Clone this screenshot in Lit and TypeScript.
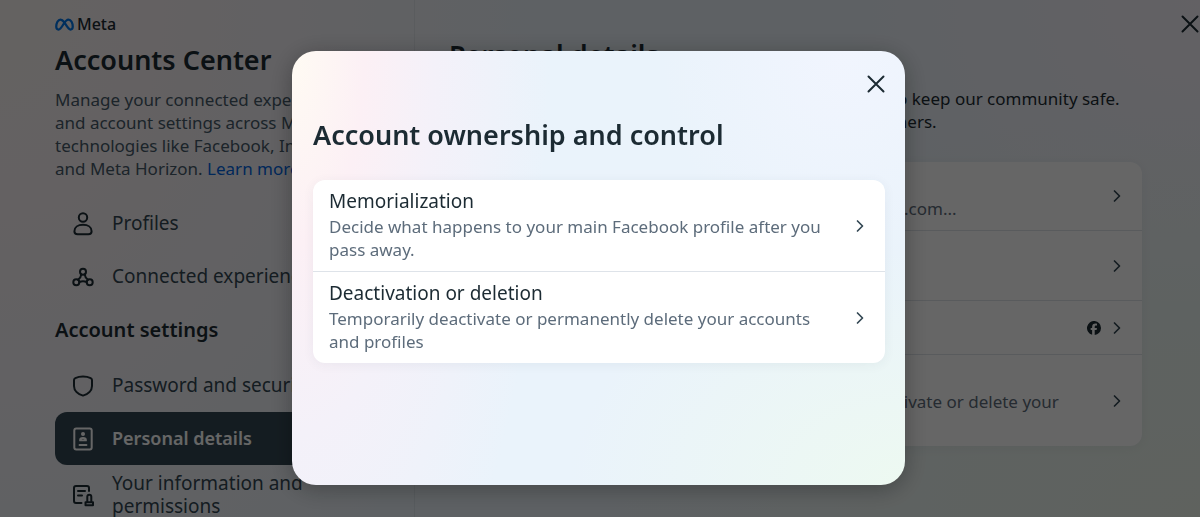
import { LitElement, html, css, svg } from "lit";
import { customElement, property } from "lit/decorators.js";
import { classMap } from "lit/directives/class-map.js";

const stroke = (body: unknown) => html`
  <svg width="24" height="24" viewBox="0 0 24 24" fill="none" stroke="currentColor"
    stroke-width="2" stroke-linecap="round" stroke-linejoin="round" aria-hidden="true">${body}</svg>`;

const icons: Record<string, unknown> = {
  profile: stroke(svg`<circle cx="12" cy="5.500" r="4.200"/><path d="M12 12.800c-5 0-8.600 2.400-8.600 6.400 0 2.100 1.200 3.100 3.200 3.100h10.800c2 0 3.200-1 3.200-3.100 0-4-3.600-6.400-8.600-6.400z"/>`),
  connected: stroke(svg`<circle cx="12" cy="6.800" r="3"/><circle cx="5.300" cy="17.300" r="3"/><circle cx="18.700" cy="17.300" r="3"/><path d="M10.300 9.300C10 12 8.800 13.500 7 14.800M13.700 9.300c.3 2.700 1.500 4.200 3.300 5.500M8.300 17c2.200-1 5.200-1 7.400 0"/>`),
  shield: stroke(svg`<path d="M12 2.600c2.900 0 5.500.5 7.700 1.500.8.400 1.300 1.100 1.300 2V12c0 4.600-3.900 8.200-9 9.600C6.900 20.200 3 16.600 3 12V6.100c0-.9.500-1.600 1.300-2C6.500 3.100 9.100 2.600 12 2.600z"/>`),
  details: stroke(svg`<rect x="3.300" y="1.500" width="17.400" height="21" rx="2"/><circle cx="12" cy="7" r="2" fill="currentColor" stroke="none"/><path d="M9 13.400c0-1.900 1.300-2.400 3-2.400s3 .5 3 2.400zM8.500 18h7" stroke-width="1.800"/>`),
  info: stroke(svg`<path d="M10.500 20H5a2 2 0 0 1-2-2V5a2 2 0 0 1 2-2h11a2 2 0 0 1 2 2v3M7 8h7M7 12.500h4"/><path d="M14.500 19.300h7.500v3h-7.500zM16.300 19.300v-5.500a2 2 0 1 1 4 0v5.500"/>`),
};

const close = html`<svg width="18" height="18" viewBox="0 0 18 18" fill="none" stroke="currentColor"
  stroke-width="2" stroke-linecap="round" aria-hidden="true"><path d="M1.500 1.500l15 15M16.500 1.500l-15 15"/></svg>`;

const chevron = html`<svg class="chevron" width="16" height="16" viewBox="0 0 16 16" fill="none"
  stroke="currentColor" stroke-width="1.700" stroke-linecap="round" stroke-linejoin="round"
  aria-hidden="true"><path d="M5.500 3l5 5-5 5"/></svg>`;

const facebook = html`<svg class="badge" width="14" height="14" viewBox="0 0 24 24" role="img" aria-label="Facebook">
  <path fill="currentColor" d="M24 12a12 12 0 1 0-15.200 11.500v-8H6.300V12h2.500v-1.600c0-4 1.900-6 5.900-6 .8 0 2 .2 2.500.3V8c-.3 0-.7-.1-1.300-.1-1.900 0-2.700.7-2.700 2.600V12h3.900l-.7 3.600h-3.200v8.300A12 12 0 0 0 24 12z"/></svg>`;

const base = css`
  * { box-sizing: border-box; }
  h1, h2, h3, p, ul { margin: 0; padding: 0; }
  ul { list-style: none; }
  svg { display: block; flex: none; }
  button { font: inherit; color: inherit; background: none; border: 0; padding: 0; text-align: left; cursor: pointer; }
  a { color: inherit; text-decoration: none; }
`;

@customElement("settings-list")
class SettingsList extends LitElement {
  @property({ attribute: false }) items: { title: string; text?: string; badge?: boolean }[] = [];

  static styles = [base, css`
    :host { display: block; }
    .card { background: #fff; border-radius: 12px; box-shadow: 0 2px 12px rgba(52, 72, 84, 0.06); overflow: hidden; }
    .item + .item { border-top: 1px solid #dee3e9; }
    .row { width: 100%; min-height: 53px; padding: 10px 17px 10px 16px; display: flex; align-items: center; gap: 8px; }
    .copy { flex: 1; min-width: 0; display: grid; gap: 2px; line-height: 23px; }
    .title { color: #1c2b33; font-size: 19px; }
    .text { color: #5d6c7b; font-size: 17px; }
    .chevron { color: #344854; }
    .badge { color: #1c2b33; }
    :host([roomy]) .item:nth-child(2) .row { min-height: 69px; }
  `];

  render() {
    return html`<ul class="card">
      ${this.items.map((i) => html`<li class="item"><button class="row">
        <span class="copy"><span class="title">${i.title}</span>${i.text ? html`<span class="text">${i.text}</span>` : ""}</span>
        ${i.badge ? facebook : ""}${chevron}
      </button></li>`)}
    </ul>`;
  }
}

@customElement("app-root")
class AppRoot extends LitElement {
  static styles = [base, css`
    :host { display: block; height: 100vh; overflow: hidden; font-family: "Noto Sans", sans-serif; font-size: 17px; line-height: 23px; color: #1c2b33; }
    .page {
      height: 100%; display: grid; grid-template-columns: 415px 1fr; overflow: hidden;
      background:
        radial-gradient(45% 140% at 0% 0%, #fbf5f2 0%, #faf3f5 25%, #f5f2f7 50%, rgba(238, 243, 251, 0) 100%),
        radial-gradient(50% 80% at 100% 100%, #edf6ec 0%, rgba(237, 246, 236, 0) 100%),
        radial-gradient(30% 60% at 100% 0%, #f7f3fb 0%, rgba(247, 243, 251, 0) 100%),
        #ebf3f9;
    }
    .side { padding: 15px 29px 0 55px; border-right: 1px solid rgba(52, 72, 84, 0.08); }
    .brand { display: flex; align-items: center; gap: 3px; height: 18px; font-size: 16px; font-weight: 500; }
    .side h1 { font-size: 27px; line-height: 34px; font-weight: 600; margin-top: 10px; }
    .intro { margin-top: 11px; color: #465a69; }
    .intro a { color: #0064e0; }
    .nav { margin-top: 17px; }
    .nav h2 { font-size: 20px; line-height: 24px; font-weight: 600; margin: 15px 0 17px; }
    .link { display: flex; align-items: center; gap: 17px; min-height: 53px; padding: 7px 16px; border-radius: 12px; color: #344854; font-size: 19px; }
    .link svg { color: #1c2b33; }
    .link.current { background: #344854; color: #fff; font-size: 18px; font-weight: 600; }
    .link.current svg { color: #fff; }
    .main { position: relative; padding: 38px 58px 0 34px; }
    .main h2 { font-size: 27px; line-height: 34px; font-weight: 600; }
    .lead { margin: 15px 0 29px; }
    .leave { position: absolute; top: 15px; right: 1px; }
    .backdrop { position: fixed; inset: 0; display: flex; justify-content: center; align-items: flex-start; padding: 51px 16px 0 13px; background: rgba(0, 0, 0, 0.6); }
    .dialog {
      width: 100%; max-width: 613px; min-height: 434px; padding: 24px 20px 0 21px; border-radius: 24px;
      display: flex; flex-direction: column;
      box-shadow: 0 4px 24px rgba(0, 0, 0, 0.3);
      background:
        radial-gradient(42% 160% at 0% 0%, #fffbf3 0%, #fcf0f5 28%, #f4f1f9 55%, rgba(234, 243, 252, 0) 100%),
        radial-gradient(55% 55% at 100% 100%, #edf9f1 0%, rgba(237, 249, 241, 0) 100%),
        radial-gradient(30% 50% at 90% 0%, #f1f5fe 0%, rgba(241, 245, 254, 0) 100%),
        #eaf3fb;
    }
    .dismiss { align-self: flex-end; }
    .dialog h2 { font-size: 27px; line-height: 34px; font-weight: 600; margin: 25px 0 28px; }
  `];

  private link(icon: string, label: string, current = false) {
    return html`<li><a href="#" class=${classMap({ link: true, current })}>${icons[icon]}<span>${label}</span></a></li>`;
  }

  render() {
    return html`
      <div class="page">
        <aside class="side">
          <div class="brand">
            <svg width="19" height="13" viewBox="0 0 38 26" fill="none" stroke="#0075e8" stroke-width="4.500" stroke-linejoin="round" aria-hidden="true">
              <path d="M19 9C16 5 14 3 11 3 6 3 2.500 10 2.500 17c0 4 1.500 6 4.500 6 3.500 0 6-4 9.500-10S22.500 3 27 3c5 0 8.500 7 8.500 14 0 4-1.500 6-4.500 6-4 0-7-6-12-14z"/>
            </svg>
            <span>Meta</span>
          </div>
          <h1>Accounts Center</h1>
          <p class="intro">Manage your connected experiences<br>and account settings across Meta<br>technologies like Facebook, Instagram<br>and Meta Horizon. <a href="#">Learn more</a></p>
          <nav class="nav">
            <ul>${this.link("profile", "Profiles")}${this.link("connected", "Connected experiences")}</ul>
            <h2>Account settings</h2>
            <ul>
              ${this.link("shield", "Password and security")}
              ${this.link("details", "Personal details", true)}
              ${this.link("info", "Your information and permissions")}
            </ul>
          </nav>
        </aside>
        <main class="main">
          <button class="leave" aria-label="Close Accounts Center">${close}</button>
          <h2>Personal details</h2>
          <p class="lead">Meta uses this information to protect your identity and to keep our community safe. You decide which personal details you make visible to others.</p>
          <settings-list roomy .items=${[
            { title: "Contact info", text: "Email addresses and phone numbers, naomi@example.com..." },
            { title: "Birthday" },
            { title: "Identity confirmation", badge: true },
            { title: "Account ownership and control", text: "Manage your data, arrange your legacy contacts, deactivate or delete your accounts and profiles." },
          ]}></settings-list>
        </main>
      </div>
      <div class="backdrop">
        <section class="dialog" role="dialog" aria-modal="true" aria-labelledby="dialog-title">
          <button class="dismiss" aria-label="Close">${close}</button>
          <h2 id="dialog-title">Account ownership and control</h2>
          <settings-list .items=${[
            { title: "Memorialization", text: "Decide what happens to your main Facebook profile after you pass away." },
            { title: "Deactivation or deletion", text: "Temporarily deactivate or permanently delete your accounts and profiles" },
          ]}></settings-list>
        </section>
      </div>`;
  }
}
